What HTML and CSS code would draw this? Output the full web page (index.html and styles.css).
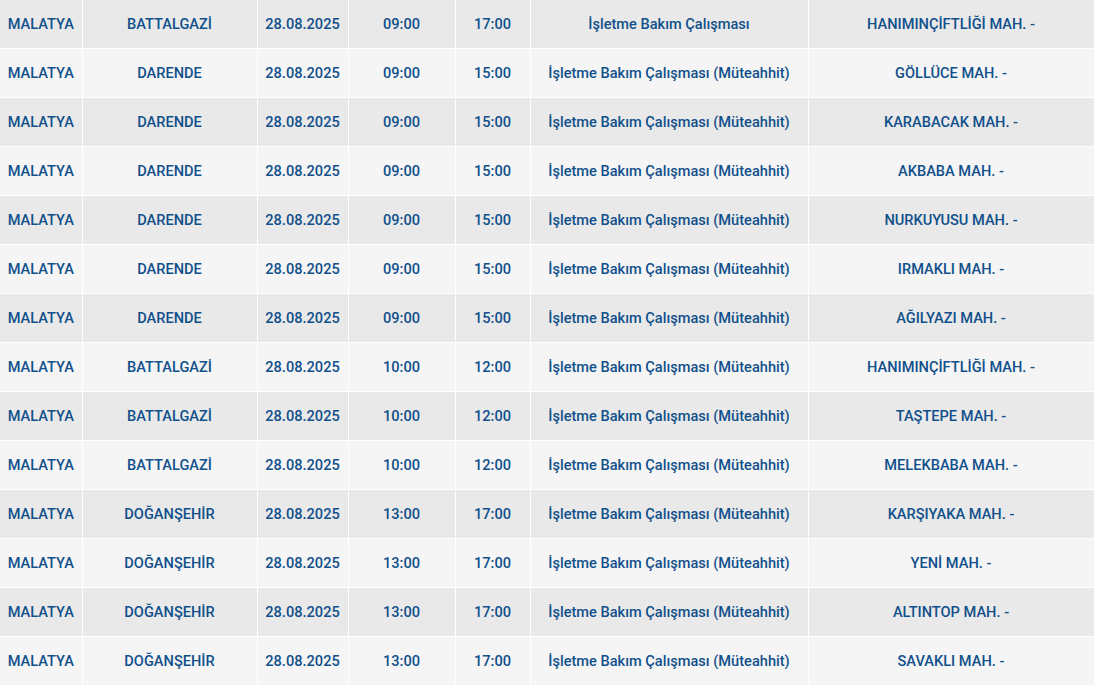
FILE: index.html
```html
<!DOCTYPE html>
<html lang="tr">
<head>
  <meta charset="UTF-8" />
  <title>Planlı Kesintiler</title>
  <link rel="stylesheet" href="styles.css">
</head>
<body>
  <table class="outage-table">
    <colgroup>
      <col class="c-city">
      <col class="c-district">
      <col class="c-date">
      <col class="c-start">
      <col class="c-end">
      <col class="c-reason">
      <col class="c-area">
    </colgroup>
    <tbody>
      <tr><td>MALATYA</td><td>BATTALGAZİ</td><td>28.08.2025</td><td>09:00</td><td>17:00</td><td>İşletme Bakım Çalışması</td><td>HANIMINÇİFTLİĞİ MAH. -</td></tr>
      <tr><td>MALATYA</td><td>DARENDE</td><td>28.08.2025</td><td>09:00</td><td>15:00</td><td>İşletme Bakım Çalışması (Müteahhit)</td><td>GÖLLÜCE MAH. -</td></tr>
      <tr><td>MALATYA</td><td>DARENDE</td><td>28.08.2025</td><td>09:00</td><td>15:00</td><td>İşletme Bakım Çalışması (Müteahhit)</td><td>KARABACAK MAH. -</td></tr>
      <tr><td>MALATYA</td><td>DARENDE</td><td>28.08.2025</td><td>09:00</td><td>15:00</td><td>İşletme Bakım Çalışması (Müteahhit)</td><td>AKBABA MAH. -</td></tr>
      <tr><td>MALATYA</td><td>DARENDE</td><td>28.08.2025</td><td>09:00</td><td>15:00</td><td>İşletme Bakım Çalışması (Müteahhit)</td><td>NURKUYUSU MAH. -</td></tr>
      <tr><td>MALATYA</td><td>DARENDE</td><td>28.08.2025</td><td>09:00</td><td>15:00</td><td>İşletme Bakım Çalışması (Müteahhit)</td><td>IRMAKLI MAH. -</td></tr>
      <tr><td>MALATYA</td><td>DARENDE</td><td>28.08.2025</td><td>09:00</td><td>15:00</td><td>İşletme Bakım Çalışması (Müteahhit)</td><td>AĞILYAZI MAH. -</td></tr>
      <tr><td>MALATYA</td><td>BATTALGAZİ</td><td>28.08.2025</td><td>10:00</td><td>12:00</td><td>İşletme Bakım Çalışması (Müteahhit)</td><td>HANIMINÇİFTLİĞİ MAH. -</td></tr>
      <tr><td>MALATYA</td><td>BATTALGAZİ</td><td>28.08.2025</td><td>10:00</td><td>12:00</td><td>İşletme Bakım Çalışması (Müteahhit)</td><td>TAŞTEPE MAH. -</td></tr>
      <tr><td>MALATYA</td><td>BATTALGAZİ</td><td>28.08.2025</td><td>10:00</td><td>12:00</td><td>İşletme Bakım Çalışması (Müteahhit)</td><td>MELEKBABA MAH. -</td></tr>
      <tr><td>MALATYA</td><td>DOĞANŞEHİR</td><td>28.08.2025</td><td>13:00</td><td>17:00</td><td>İşletme Bakım Çalışması (Müteahhit)</td><td>KARŞIYAKA MAH. -</td></tr>
      <tr><td>MALATYA</td><td>DOĞANŞEHİR</td><td>28.08.2025</td><td>13:00</td><td>17:00</td><td>İşletme Bakım Çalışması (Müteahhit)</td><td>YENİ MAH. -</td></tr>
      <tr><td>MALATYA</td><td>DOĞANŞEHİR</td><td>28.08.2025</td><td>13:00</td><td>17:00</td><td>İşletme Bakım Çalışması (Müteahhit)</td><td>ALTINTOP MAH. -</td></tr>
      <tr><td>MALATYA</td><td>DOĞANŞEHİR</td><td>28.08.2025</td><td>13:00</td><td>17:00</td><td>İşletme Bakım Çalışması (Müteahhit)</td><td>SAVAKLI MAH. -</td></tr>
    </tbody>
  </table>
</body>
</html>
```

FILE: styles.css
```css
/* Reset */
* {
  margin: 0;
  padding: 0;
  box-sizing: border-box;
}
body {
  font-family: Roboto, "Liberation Sans", sans-serif;
  background: #f5f5f5;
  overflow: hidden;
}

/* Table */
.outage-table {
  width: 1094px;
  border-collapse: collapse;
  table-layout: fixed;
  margin-top: -1px;
}
.c-city { width: 82px; }
.c-district { width: 175px; }
.c-date { width: 91px; }
.c-start { width: 107px; }
.c-end { width: 75px; }
.c-reason { width: 278px; }
.c-area { width: 286px; }

.outage-table td {
  height: 49px;
  border: 1px solid #fff;
  text-align: center;
  vertical-align: middle;
  font-size: 14.6px;
  font-weight: 500;
  color: #11508b;
  white-space: nowrap;
}
.outage-table tr:nth-child(odd) td {
  background: #e9e9e9;
}
.outage-table tr:nth-child(even) td {
  background: #f5f5f5;
}
.outage-table td:first-child {
  border-left: none;
}
```
